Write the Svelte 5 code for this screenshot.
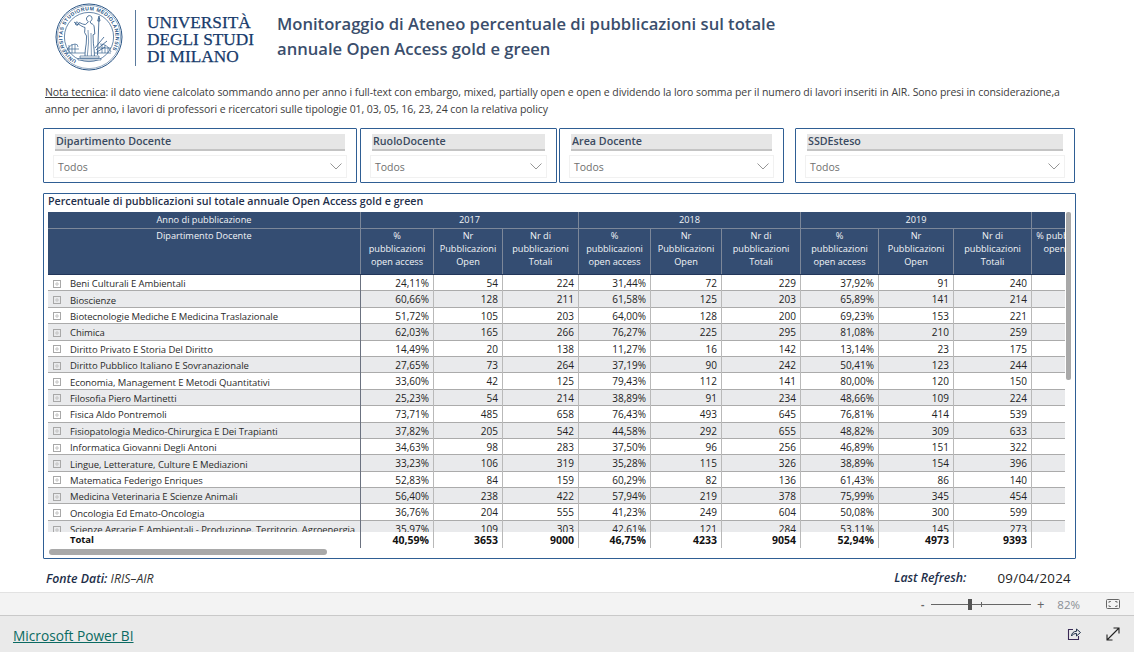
<script>
  const years = ['2017', '2018', '2019'];
  const slicers = [
    { label: 'Dipartimento Docente', cls: 's1' },
    { label: 'RuoloDocente', cls: 's2' },
    { label: 'Area Docente', cls: 's3' },
    { label: 'SSDEsteso', cls: 's4' }
  ];
  const rows = [
    ['Beni Culturali E Ambientali','24,11%',54,224,'31,44%',72,229,'37,92%',91,240],
    ['Bioscienze','60,66%',128,211,'61,58%',125,203,'65,89%',141,214],
    ['Biotecnologie Mediche E Medicina Traslazionale','51,72%',105,203,'64,00%',128,200,'69,23%',153,221],
    ['Chimica','62,03%',165,266,'76,27%',225,295,'81,08%',210,259],
    ['Diritto Privato E Storia Del Diritto','14,49%',20,138,'11,27%',16,142,'13,14%',23,175],
    ['Diritto Pubblico Italiano E Sovranazionale','27,65%',73,264,'37,19%',90,242,'50,41%',123,244],
    ['Economia, Management E Metodi Quantitativi','33,60%',42,125,'79,43%',112,141,'80,00%',120,150],
    ['Filosofia Piero Martinetti','25,23%',54,214,'38,89%',91,234,'48,66%',109,224],
    ['Fisica Aldo Pontremoli','73,71%',485,658,'76,43%',493,645,'76,81%',414,539],
    ['Fisiopatologia Medico-Chirurgica E Dei Trapianti','37,82%',205,542,'44,58%',292,655,'48,82%',309,633],
    ['Informatica Giovanni Degli Antoni','34,63%',98,283,'37,50%',96,256,'46,89%',151,322],
    ['Lingue, Letterature, Culture E Mediazioni','33,23%',106,319,'35,28%',115,326,'38,89%',154,396],
    ['Matematica Federigo Enriques','52,83%',84,159,'60,29%',82,136,'61,43%',86,140],
    ['Medicina Veterinaria E Scienze Animali','56,40%',238,422,'57,94%',219,378,'75,99%',345,454],
    ['Oncologia Ed Emato-Oncologia','36,76%',204,555,'41,23%',249,604,'50,08%',300,599],
    ['Scienze Agrarie E Ambientali - Produzione, Territorio, Agroenergia','35,97%',109,303,'42,61%',121,284,'53,11%',145,273]
  ];
  const total = ['Total','40,59%',3653,9000,'46,75%',4233,9054,'52,94%',4973,9393];
</script>

<div class="page">
  <header class="top">
    <svg class="seal" viewBox="0 0 68 68" width="68" height="68" aria-hidden="true">
      <defs><path id="ring" d="M34 34 m-26.600 0 a26.600 26.600 0 1 1 53.200 0 a26.600 26.600 0 1 1 -53.200 0" /></defs>
      <circle cx="34" cy="34" r="33" fill="none" stroke="#2a5585" stroke-width="1" />
      <circle cx="34" cy="34" r="31.600" fill="none" stroke="#2a5585" stroke-width=".5" />
      <circle cx="34" cy="34" r="24.600" fill="none" stroke="#2a5585" stroke-width=".7" />
      <text class="ringtext" transform="rotate(-62 34 34)"><textPath href="#ring">UNIVERSITAS STUDIORUM MEDIOLANENSIS</textPath></text>
      <path d="M11 50 q2-8 9-9 q3 0 3 3 M12 46h12 M14 42v8 M17 41v9 M20 41v9 M45 41q8 0 11 8 M44 45h12 M47 42v8 M50 42v8 M53 44v6 M12 50h44" fill="none" stroke="#3d6794" stroke-width=".7" />
      <path d="M33 13c2-1 4 0 4 2.500c0 1.500-.8 2.700-2 3l1 2c2 .6 3 1.500 3.200 3.500l.6 7l-1.800 .8l.4 9c.6 4 1 8 1 13.200h-9.400c0-5 .4-9 1.200-13l.4-8l-2-3.500l.4-5c-2-.6-4-1.500-6.500-3.500l1-1.500c2.200 1.200 4 2 5.800 2l2-1.500l1-1.500c-1.300-.6-2-2-1.800-3.500z" fill="#fff" stroke="#2a5585" stroke-width=".8" />
      <path d="M33 27l.6 12l-1.300 14 M36 30l.4 23" fill="none" stroke="#2a5585" stroke-width=".6" />
      <path d="M21 22c-1-1-.6-3 .8-3s2 1.500 1.200 3zM19 19l4 3 M44 15l-1.500 37 M44 13l-1.300 5l2.300 0z M40 45l9-11 M41 47l11-9 M42 49l8-5" fill="none" stroke="#2a5585" stroke-width=".8" />
      <path d="M25 53h19v2H25z M23 55.500h23v1.500H23z" fill="#fff" stroke="#2a5585" stroke-width=".6" />
    </svg>
    <span class="rule"></span>
    <div class="wordmark">UNIVERSITÀ<br />DEGLI STUDI<br />DI MILANO</div>
    <h1>Monitoraggio di Ateneo percentuale di pubblicazioni sul totale<br />annuale Open Access gold e green</h1>
  </header>

  <p class="note"><u>Nota tecnica</u>: il dato viene calcolato sommando anno per anno i full-text con embargo, mixed, partially open e open e dividendo la loro somma per il numero di lavori inseriti in AIR. Sono presi in considerazione,a anno per anno, i lavori di professori e ricercatori sulle tipologie 01, 03, 05, 16, 23, 24 con la relativa policy</p>

  <section class="slicers">
    {#each slicers as s}
      <div class="slicer {s.cls}">
        <div class="slabel">{s.label}</div>
        <div class="sbox">
          <span>Todos</span>
          <svg width="12" height="7" viewBox="0 0 12 7" aria-hidden="true"><path d="M.5 .5L6 6l5.500-5.500" fill="none" stroke="#8a8a8a" stroke-width=".9" /></svg>
        </div>
      </div>
    {/each}
  </section>

  <section class="card">
    <h2>Percentuale di pubblicazioni sul totale annuale Open Access gold e green</h2>
    <div class="matrix">
      <div class="hrow h1row">
        <div class="hcell">Anno di pubblicazione</div>
        {#each years as y}<div class="hcell">{y}</div>{/each}
        <div class="hcell last"></div>
      </div>
      <div class="hrow h2row grid">
        <div class="hcell">Dipartimento Docente</div>
        {#each years as y}
          <div class="hcell">%<br />pubblicazioni<br />open access</div>
          <div class="hcell">Nr<br />Pubblicazioni<br />Open</div>
          <div class="hcell">Nr di<br />pubblicazioni<br />Totali</div>
        {/each}
        <div class="hcell last">% pubblicazioni<br />open access</div>
      </div>
      <div class="body">
        {#each rows as r, i}
          <div class="drow grid" class:alt={i % 2 === 1}>
            <div class="dcell dept name">
              <svg class="exp" width="8" height="8" viewBox="0 0 8 8" aria-hidden="true"><rect x=".5" y=".5" width="7" height="7" fill="none" stroke="#a8a8a8" /><path d="M2 4h4M4 2v4" stroke="#c4c4c4" /></svg>
              <span>{r[0]}</span>
            </div>
            {#each r.slice(1) as v}
              <div class="dcell num">{v}</div>
            {/each}
            <div class="dcell last"></div>
          </div>
        {/each}
      </div>
      <div class="drow grid totalrow">
        <div class="dcell dept name"><span class="tot">{total[0]}</span></div>
        {#each total.slice(1) as v}
          <div class="dcell num">{v}</div>
        {/each}
        <div class="dcell last"></div>
      </div>
    </div>
    <span class="vbar"></span>
    <span class="hbar"></span>
  </section>

  <section class="sources">
    <div class="fonte"><b>Fonte Dati:</b> IRIS–AIR</div>
    <div class="refresh"><b>Last Refresh:</b><span>09/04/2024</span></div>
  </section>

  <section class="zoombar">
    <span class="minus">-</span>
    <span class="track"><i class="knob"></i><i class="tick"></i></span>
    <span class="plus">+</span>
    <span class="pct">82%</span>
    <svg width="14" height="10" viewBox="0 0 14 10" aria-hidden="true"><rect x=".5" y=".5" width="13" height="9" rx="1" fill="none" stroke="#666" /><path d="M3 4V2.500h2M9 2.500h2V4M11 6v1.500H9M5 7.500H3V6" fill="none" stroke="#666" stroke-width=".8" /></svg>
  </section>

  <footer class="foot">
    <a href="#top">Microsoft Power BI</a>
    <div class="ficons">
      <svg width="14" height="14" viewBox="0 0 14 14" aria-hidden="true"><path d="M6 2.500H1.500v10h10V9" fill="none" stroke="#3a2a55" stroke-width="1.100" /><path d="M4.500 9c.2-3 2.200-4.700 5-4.700V2l4 3.500l-4 3.500V6.500c-2.200 0-3.800 .8-5 2.500z" fill="none" stroke="#22324a" stroke-width="1" /></svg>
      <svg width="14" height="14" viewBox="0 0 14 14" aria-hidden="true"><path d="M1 13L13 1M7.500 1H13v5.500M1 7.500V13h5.500" fill="none" stroke="#222" stroke-width="1.100" /></svg>
    </div>
  </footer>
</div>

<style>
  :global(body) { margin: 0; background: #fff; }
  .page {
    width: 1134px; height: 652px; overflow: hidden;
    font-family: "Open Sans", "Noto Sans", sans-serif;
    color: #252525;
    display: flex; flex-direction: column;
  }
  .top { height: 75px; display: flex; align-items: flex-start; padding-left: 55px; box-sizing: border-box; padding-top: 3px; }
  .seal { flex: none; width: 68px; height: 68px; }
  .ringtext { font: 600 5.100px "Liberation Sans", sans-serif; fill: #2a5585; letter-spacing: .42px; }
  .rule { width: 1px; height: 56px; background: #5a7a9d; margin: 7px 11px 0 12px; flex: none; }
  .wordmark {
    font-family: "Liberation Serif", serif; font-size: 17.300px; line-height: 17px;
    color: #163a6b; width: 130px; flex: none; margin-top: 10.500px; -webkit-text-stroke: .25px #163a6b;
  }
  h1 {
    margin: 8px 0 0 0; font-size: 16.620px; font-weight: 600; line-height: 25px; color: #3a4e6c;
  }
  .note {
    margin: 9px 0 0 45px; width: 1024px; font-size: 10.500px; line-height: 17px; height: 34px; color: #3c3c3c; font-weight: 400; letter-spacing: -.06px;
  }
  .slicers { margin: 10px 0 0 43px; display: flex; height: 55px; }
  .slicer { box-sizing: border-box; height: 55px; border: 1px solid #2f5e94; border-radius: 1px; padding: 5px 9px 0; flex: none; }
  .s1 { width: 314px; margin-right: 3px; }
  .s2 { width: 197px; margin-right: 2px; }
  .s3 { width: 225px; margin-right: 11px; }
  .s4 { width: 280px; }
  .slabel { margin: 0 2px; padding-left: 1px; height: 15px; background: #e6e6e6; border-bottom: 2px solid #c4c4c4; font-size: 10.700px; font-weight: 600; line-height: 14px; color: #3a4a60; }
  .sbox { margin-top: 4px; box-sizing: border-box; height: 23px; border: 1.500px solid #f1f1f1; display: flex; align-items: center; justify-content: space-between; padding: 1px 2px 0 4px; font-size: 10.500px; color: #6f6f6f; }
  .sbox svg { margin: -2px 2px 0 0; }
  .card { position: relative; margin: 10px 0 0 43px; width: 1033px; height: 366px; box-sizing: border-box; border: 1px solid #2f5e94; border-radius: 1px; padding: 0 0 0 4px; }
  h2 { margin: 0; height: 18px; font-size: 10.700px; font-weight: 600; line-height: 15px; color: #1f2f4a; }
  .matrix { width: 1017px; overflow: hidden; }
  .h1row { display: grid; width: 1100px; grid-template-columns: 313px 218px 222px 231px 75px; height: 16px; border-bottom: 1px solid #7c8799; }
  .grid { display: grid; width: 1100px; grid-template-columns: 313px 73px 69px 76px 72px 71px 79px 78px 75px 78px 75px; }
  .hcell { box-sizing: border-box; background: #344d72; color: #f2f4f7; font-size: 9.200px; text-align: center; border-right: 1px solid #7c8799; white-space: nowrap; }
  .hcell.last, .dcell.last { border-right: 0; }
  .h1row .hcell { line-height: 15px; }
  .h2row { height: 46px; border-bottom: 1px solid #22365a; box-sizing: border-box; }
  .h2row .hcell { line-height: 13px; padding-top: 0; }
  .body { height: 257px; overflow: hidden; }
  .drow { height: 16.400px; background: #fff; }
  .body .drow { box-shadow: inset 0 -1px 0 #ababab; }
  .drow.alt { background: #e9eaec; }
  .dcell { box-sizing: border-box; font-size: 9.500px; line-height: 17px; height: 16.400px; border-right: 1px solid #b9b9b9; }
  .dcell.dept { border-right-color: #6b7280; }
  .name { display: flex; align-items: center; padding-left: 5px; padding-top: 1px; white-space: nowrap; color: #2a2a2a; }
  .name span { margin-left: 9px; letter-spacing: -.07px; }
  .name .tot { margin-left: 17px; font-weight: 700; color: #111; }
  .exp { flex: none; }
  .num { text-align: right; padding-right: 4px; font-size: 10px; color: #222; }
  .totalrow { height: 16px; background: #fff; }
  .totalrow .dcell { height: 16px; line-height: 16px; }
  .totalrow .name { padding-top: 0; }
  .totalrow .num { font-weight: 700; color: #111; font-size: 10.500px; }
  .vbar { position: absolute; left: 1022px; top: 18px; width: 5px; height: 168px; background: #a9a9a9; border-radius: 2px; }
  .hbar { position: absolute; left: 5px; top: 355px; width: 278px; height: 6px; background: #a9a9a9; border-radius: 3px; }
  .sources { display: flex; justify-content: space-between; height: 33px; padding: 11px 63px 0 46px; box-sizing: border-box; }
  .fonte { font-size: 12.300px; font-style: italic; color: #333; }
  .fonte b, .refresh b { font-weight: 600; color: #1e2f4a; }
  .refresh { display: flex; gap: 31px; font-size: 12.300px; font-style: italic; margin-top: -1px; }
  .refresh span { font-style: normal; font-size: 13.300px; letter-spacing: .3px; color: #222; }
  .zoombar { height: 24px; flex: none; box-sizing: border-box; background: #f3f3f3; border-top: 1px solid #e2e2e2; border-bottom: 1px solid #c9c9c9; display: flex; align-items: center; justify-content: flex-end; padding-right: 14px; font-size: 10.500px; color: #666; }
  .minus { font-weight: 700; width: 9px; }
  .track { position: relative; width: 100px; height: 1px; background: #666; margin-left: 1px; }
  .knob { position: absolute; left: 37px; top: -5px; width: 4px; height: 11px; background: #555; }
  .tick { position: absolute; left: 50px; top: -2px; width: 1px; height: 5px; background: #666; }
  .plus { font-size: 13px; margin: 0 0 0 6px; }
  .pct { color: #8a8f96; margin: 0 26px 0 13px; font-size: 11.500px; }
  .foot { flex: 1; background: #eaeaea; display: flex; align-items: center; justify-content: space-between; padding: 2px 14px 0 13px; }
  .foot a { color: #0b6a62; font-size: 13.700px; text-decoration: underline; }
  .ficons { display: flex; gap: 25px; margin-top: -2px; }
</style>
